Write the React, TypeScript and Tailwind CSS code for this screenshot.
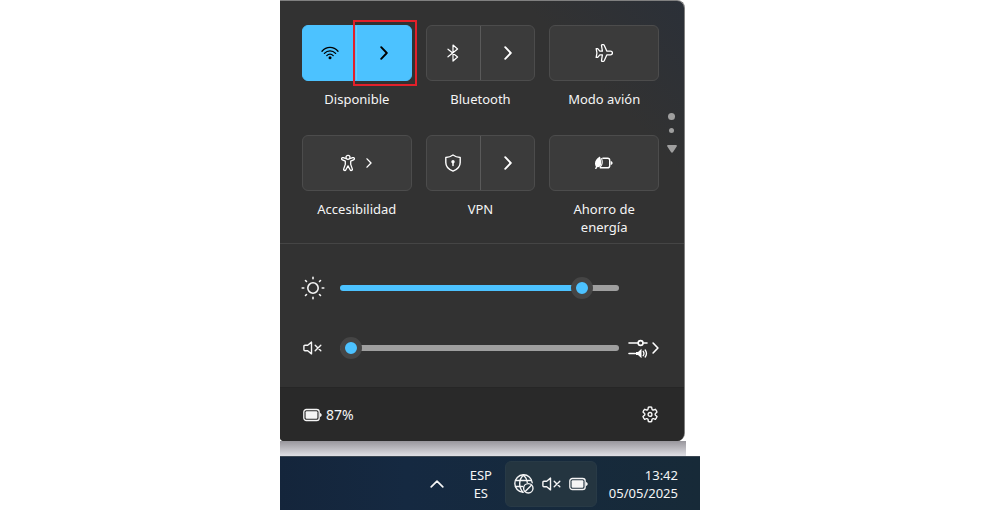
import React, { useState } from 'react';
import { clsx } from 'clsx';

interface IconProps {
  className?: string;
}

const ChevronIcon: React.FC<IconProps> = ({ className }) => (
  <svg viewBox="0 0 8 14" className={clsx('shrink-0', className)} fill="none" stroke="currentColor" strokeWidth="1.9" strokeLinecap="round" strokeLinejoin="round">
    <path d="M1.2 1.2 6.8 7l-5.6 5.8" />
  </svg>
);

const WifiIcon = () => (
  <svg width="18" height="14" viewBox="0 0 18 14" fill="none" stroke="currentColor" strokeWidth="1.3" strokeLinecap="round">
    <path d="M1 5.2C5.4.2 12.6.2 17 5.2" />
    <path d="M3.4 7.4c3.2-3.5 8-3.5 11.2 0" />
    <path d="M5.8 9.6c1.9-2 4.5-2 6.4 0" />
    <circle cx="9" cy="11.8" r="1.5" fill="currentColor" stroke="none" />
  </svg>
);

const BluetoothIcon = () => (
  <svg width="12" height="18" viewBox="0 0 12 18" fill="none" stroke="currentColor" strokeWidth="1.2" strokeLinecap="round" strokeLinejoin="round">
    <path d="M1 5.2 10.6 13 6 17V1l4.6 4L1 12.8" />
  </svg>
);

const PlaneIcon = () => (
  <svg width="18" height="18" viewBox="0 0 18 18" fill="none" stroke="currentColor" strokeWidth="1.3" strokeLinejoin="round">
    <path d="M1.2 4.6h1.5l2.1 2.6h2.6L6.5 1.700c-.1-.6.2-1 .8-1h1c.4 0 .7.2.9.6l2.700 5.900h3.600c1.100 0 1.900.8 1.900 1.800s-.8 1.800-1.900 1.800h-3.600l-2.700 5.900c-.2.4-.5.6-.9.6h-1c-.6 0-.9-.4-.8-1l.9-5.500H4.800l-2.100 2.600H1.200l.7-4.400z" />
  </svg>
);

const AccessibilityIcon = () => (
  <svg width="14" height="18" viewBox="0 0 14 18" fill="none" stroke="currentColor" strokeWidth="1.300" strokeLinejoin="round">
    <circle cx="7" cy="3.300" r="2" />
    <path d="M4.900 4.700 2.400 3.700C1.600 3.400.9 3.700.7 4.300c-.2.6 0 1.200.7 1.500l2.900 1.300v3.300l-1.600 4.500c-.2.7.1 1.300.7 1.500.6.2 1.200 0 1.500-.7L7 11.900l2.100 3.800c.3.7.9.9 1.500.7.6-.2.9-.8.7-1.500l-1.600-4.500V7.100l2.900-1.300c.7-.3.9-.9.7-1.500-.2-.6-.9-.9-1.700-.6L9.100 4.700" />
  </svg>
);

const ShieldIcon = () => (
  <svg width="18" height="18" viewBox="0 0 18 18" fill="none" stroke="currentColor" strokeWidth="1.4" strokeLinejoin="round">
    <path d="M9 1c2 1.5 4.3 2.3 7.2 2.5v5c0 4-2.6 6.9-7.2 8.6-4.6-1.7-7.2-4.6-7.2-8.6v-5C4.7 3.3 7 2.5 9 1z" />
    <circle cx="9" cy="7.7" r="1.7" fill="currentColor" stroke="none" />
    <path d="M9 8v3.5" strokeWidth="1.5" strokeLinecap="round" />
  </svg>
);

const SaverIcon = () => (
  <svg width="20" height="14" viewBox="0 0 20 14" fill="none" stroke="currentColor" strokeWidth="1.4" strokeLinecap="round" strokeLinejoin="round">
    <path d="M8.8 2.2h4.800c1.300 0 2.100.8 2.100 2.100v5.400c0 1.300-.8 2.100-2.100 2.100H6.200" />
    <path d="M16.600 5c1.300.2 2 .9 2 2s-.7 1.800-2 2z" fill="currentColor" stroke="none" />
    <path d="M5.900.6C2.600 2.800 1 4.700 1 7.500c0 1.200.3 2.200.9 2.900L1 12.900h1.400l.7-1.700c2.600.2 4.100-1.200 4.100-4C7.200 5 6.700 2.600 5.900.6z" fill="currentColor" stroke="none" />
    <path d="M7.600 2.600c1.100 3.100.8 6.200-1.200 8.200" strokeWidth="1.100" />
  </svg>
);

const SunIcon = () => (
  <svg width="24" height="24" viewBox="0 0 24 24" fill="none" stroke="currentColor" strokeWidth="1.6" strokeLinecap="round">
    <circle cx="12" cy="12" r="5.2" />
    <path d="M12 1.2v1.600M12 21.200v1.600M1.200 12h1.600M21.200 12h1.600M4.500 4.500l1 1M18.500 18.500l1 1M4.500 19.500l1-1M18.500 5.500l1-1" />
  </svg>
);

const MutedIcon = () => (
  <svg width="19" height="14" viewBox="0 0 19 14" fill="none" stroke="currentColor" strokeWidth="1.4" strokeLinecap="round" strokeLinejoin="round">
    <path d="M8.5 1.1v11.800L4.700 9.800H1.900c-.6 0-1-.4-1-1V5.200c0-.6.4-1 1-1h2.800z" />
    <path d="m12.200 4.200 5.600 5.600M17.800 4.200l-5.600 5.600" />
  </svg>
);

const BatteryIcon = () => (
  <svg width="19" height="14" viewBox="0 0 19 14" fill="none" stroke="currentColor" strokeWidth="1.3">
    <rect x=".8" y="1.500" width="15.400" height="11" rx="2.600" />
    <rect x="2.600" y="3.300" width="11.800" height="7.400" rx="1" fill="currentColor" stroke="none" />
    <path d="M16.800 5c1.200.2 1.900.9 1.900 2s-.7 1.800-1.900 2z" fill="currentColor" stroke="none" />
  </svg>
);

const MixerIcon = () => (
  <svg width="20" height="19" viewBox="0 0 20 19" fill="none" stroke="currentColor" strokeWidth="1.6" strokeLinecap="round">
    <path d="M1 4h9M15.200 4H19M1 14.500h6.500" />
    <circle cx="12.600" cy="4" r="2.400" />
    <path d="M8 13h2l3.500-3.200v9.400L10 16H8z" fill="currentColor" stroke="none" />
    <path d="M15.200 12.300c.9 1.300.9 3.100 0 4.400M17.200 11c1.600 2.200 1.600 4.800 0 7" strokeWidth="1.300" />
  </svg>
);

const GearIcon = () => (
  <svg width="18" height="18" viewBox="0 0 18 18" fill="none" stroke="currentColor" strokeWidth="1.4" strokeLinejoin="round">
    <path d="M7.400 1.200c1-.3 2.200-.3 3.200 0l.4 2c.1.600.8 1 1.400.8l1.900-.7c.8.8 1.400 1.700 1.700 2.800l-1.500 1.500c-.5.4-.5 1.200 0 1.600l1.500 1.400c-.3 1.100-.9 2-1.700 2.800l-1.900-.7c-.6-.2-1.300.2-1.400.8l-.4 2c-1 .3-2.200.3-3.200 0l-.4-2c-.1-.6-.8-1-1.400-.8l-1.900.7C2.900 12.600 2.300 11.700 2 10.600l1.500-1.400c.5-.4.5-1.200 0-1.600L2 6.100c.3-1.100.9-2 1.700-2.800l1.900.7c.6.200 1.300-.2 1.400-.8z" />
    <circle cx="9" cy="8.400" r="1.900" />
  </svg>
);

const GlobeIcon = () => (
  <svg width="20" height="20" viewBox="0 0 20 20" fill="none" stroke="currentColor" strokeWidth="1.4" strokeLinecap="round">
    <path d="M18.200 8.800A8.700 8.700 0 1 0 9 18.200" />
    <path d="M9.500 1c-5 4.500-5 12.500-.5 17.200M9.500 1c2.300 2.200 3.500 4.700 3.800 7.400M1.800 6.500h15.600M1.500 12.500h7" />
    <circle cx="14.300" cy="14.300" r="4.700" />
    <path d="m11.200 17.400 6.200-6.200" />
  </svg>
);

interface TileProps {
  label: string;
  icon: React.ReactNode;
  split?: boolean;
  active?: boolean;
  marked?: boolean;
}

const Tile: React.FC<TileProps> = ({ label, icon, split, active, marked }) => (
  <div className="flex flex-col items-center gap-[9px]">
    <div
      className={clsx(
        'flex h-14 w-full rounded-md border',
        active ? 'border-[#4cc2ff] bg-[#4cc2ff] text-black' : 'border-[#4c4c4c] bg-[#3b3b3b] text-white'
      )}
    >
      <button type="button" aria-label={label} className="flex flex-1 items-center justify-center">
        {icon}
      </button>
      {split && (
        <button
          type="button"
          aria-label={`${label}: más opciones`}
          className={clsx(
            'relative flex flex-1 items-center justify-center border-l',
            active ? 'border-[#69cdff]' : 'border-[#5a5a5a]'
          )}
        >
          <ChevronIcon className="h-3.5 w-2" />
          {marked && <span className="absolute -top-1.5 -right-1.5 -bottom-1.5 -left-1 border-2 border-[#e3202a]" />}
        </button>
      )}
    </div>
    <span className="w-20 text-center text-[13px] leading-[18px] whitespace-nowrap">{label}</span>
  </div>
);

interface SliderProps {
  label: string;
  value: number;
  onChange: (value: number) => void;
}

const Slider: React.FC<SliderProps> = ({ label, value, onChange }) => (
  <input
    type="range"
    aria-label={label}
    min={0}
    max={100}
    value={value}
    onChange={(e) => onChange(Number(e.target.value))}
    className="h-1.5 min-w-0 flex-1 appearance-none rounded-full [&::-webkit-slider-thumb]:h-[22px] [&::-webkit-slider-thumb]:w-[22px] [&::-webkit-slider-thumb]:appearance-none [&::-webkit-slider-thumb]:rounded-full [&::-webkit-slider-thumb]:border-[5px] [&::-webkit-slider-thumb]:border-[#454545] [&::-webkit-slider-thumb]:bg-[#4cc2ff]"
    style={{ backgroundImage: `linear-gradient(to right, #4cc2ff ${value}%, #9f9f9f ${value}%)` }}
  />
);

const QuickSettings = () => {
  const [brightness, setBrightness] = useState(90);
  const [volume, setVolume] = useState(0);

  return (
    <section className="mr-[15px] overflow-hidden rounded-r-lg rounded-bl border-t border-r border-[#808080] bg-linear-to-bl from-[#2b3038] via-[#323232] via-20% to-[#323232]">
      <div className="flex items-center border-b border-[#454545] pb-[7px]">
        <div className="grid flex-1 grid-cols-3 gap-x-3.5 gap-y-[27px] pt-6 pl-[22px]">
          <Tile label="Disponible" icon={<WifiIcon />} split active marked />
          <Tile label="Bluetooth" icon={<BluetoothIcon />} split />
          <Tile label="Modo avión" icon={<PlaneIcon />} />
          <Tile
            label="Accesibilidad"
            icon={
              <span className="flex items-center gap-[11px]">
                <AccessibilityIcon />
                <ChevronIcon className="h-2.5 w-1.5" />
              </span>
            }
          />
          <Tile label="VPN" icon={<ShieldIcon />} split />
          <div className="[&_span]:whitespace-normal">
            <Tile label="Ahorro de energía" icon={<SaverIcon />} />
          </div>
        </div>
        <nav aria-label="Páginas" className="flex w-[25px] flex-col items-center gap-2 pt-9 pb-2">
          <button type="button" aria-label="Página 1" className="size-[7px] rounded-full bg-[#9f9f9f]" />
          <button type="button" aria-label="Página 2" className="size-[5px] rounded-full bg-[#9f9f9f]" />
          <button type="button" aria-label="Página siguiente" className="mt-1 text-[#9f9f9f]">
            <svg width="10" height="8" viewBox="0 0 10 8" fill="currentColor">
              <path d="M1 0h8c.8 0 1.200.8.7 1.500L5.900 7.300c-.4.6-1.400.6-1.800 0L.3 1.500C-.2.8.2 0 1 0z" />
            </svg>
          </button>
        </nav>
      </div>

      <div className="flex flex-col gap-9 pt-8 pr-[25px] pb-[27px] pl-[21px]">
        <div className="flex h-6 items-center">
          <span className="w-[39px]"><SunIcon /></span>
          <Slider label="Brillo" value={brightness} onChange={setBrightness} />
          <span className="w-10" />
        </div>
        <div className="flex h-6 items-center">
          <button type="button" aria-label="Silenciar" className="w-[39px] pl-0.5"><MutedIcon /></button>
          <Slider label="Volumen" value={volume} onChange={setVolume} />
          <button type="button" aria-label="Salida de sonido" className="flex w-10 items-center justify-end gap-1 text-white">
            <MixerIcon />
            <ChevronIcon className="h-3 w-[7px]" />
          </button>
        </div>
      </div>

      <footer className="flex h-[54px] items-center justify-between border-t border-[#262626] bg-[#292929] pr-[25px] pl-[23px]">
        <button type="button" className="flex items-center gap-1 text-sm">
          <BatteryIcon />
          87%
        </button>
        <button type="button" aria-label="Configuración"><GearIcon /></button>
      </footer>
    </section>
  );
};

const Taskbar = () => (
  <footer className="flex h-[54px] items-center justify-end border-t border-[#3a4652] bg-linear-to-r from-[#14253b] via-[#152941] via-30% to-[#172a38] pr-[22px] text-[13px] leading-[18px]">
    <button type="button" aria-label="Mostrar iconos ocultos" className="mr-[25px]">
      <svg width="14" height="8" viewBox="0 0 14 8" fill="none" stroke="currentColor" strokeWidth="1.7" strokeLinecap="round" strokeLinejoin="round">
        <path d="M1.200 6.800 7 1.200l5.800 5.600" />
      </svg>
    </button>
    <button type="button" className="mr-3 w-6 text-center">
      ESP
      <br />
      ES
    </button>
    <button type="button" aria-label="Red, sonido y batería" className="mr-3 flex h-[46px] w-[92px] items-center justify-center gap-2 rounded-md border border-[#283a46] bg-[#243540]">
      <GlobeIcon />
      <MutedIcon />
      <BatteryIcon />
    </button>
    <button type="button" className="text-right">
      13:42
      <br />
      05/05/2025
    </button>
  </footer>
);

export default function App() {
  return (
    <div className="min-h-screen bg-white pl-[280px] font-['Noto_Sans','Open_Sans',sans-serif] text-[#f5f5f5]">
      <main className="w-full max-w-[420px]">
        <QuickSettings />
        <div className="mr-3.5 h-[15px] bg-linear-to-b from-[#98969c] to-[#e0e0e5]" />
        <Taskbar />
      </main>
    </div>
  );
}
